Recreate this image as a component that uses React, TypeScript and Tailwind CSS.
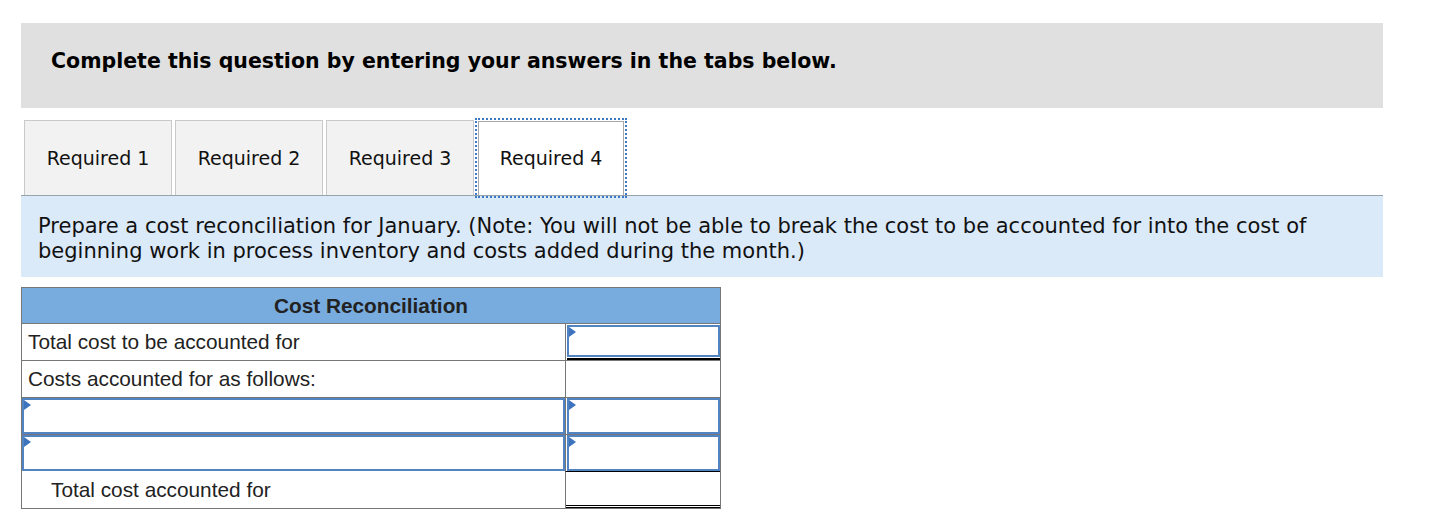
import React from "react";

const verdana = { fontFamily: '"DejaVu Sans", Verdana, sans-serif' };

function Marker() {
  return (
    <span className="absolute left-0 top-0 w-0 h-0 border-y-[5px] border-y-transparent border-l-[7px] border-l-[#3d74bd]" />
  );
}

function InputBox({ className = "" }: { className?: string }) {
  return (
    <div className={`relative border-2 border-[#5284c3] bg-white ${className}`}>
      <Marker />
    </div>
  );
}

function Tab({ label, active }: { label: string; active?: boolean }) {
  if (active) {
    return (
      <div className="ml-[1px] mt-[1px] w-[146px] h-[74px] flex items-center justify-center bg-white border border-[#a8a8a8] border-b-0 outline-2 outline-dotted outline-[#3b78c5] outline-offset-[1px] text-[19px] text-[#111]">
        {label}
      </div>
    );
  }
  return (
    <div className="w-[148px] h-[75px] flex items-center justify-center bg-[#f2f2f2] border border-[#c9c9c9] border-b-0 text-[19px] text-[#111]">
      {label}
    </div>
  );
}

export default function App() {
  return (
    <div className="bg-white min-h-screen pt-[23px] pl-[21px]">
      <div className="w-[1362px]" style={verdana}>
        <div className="h-[85px] bg-[#e0e0e0] flex items-center pl-[30px] pb-[8px]">
          <h2 className="font-bold text-[20.5px] text-black">
            Complete this question by entering your answers in the tabs below.
          </h2>
        </div>

        <div className="flex gap-[3px] pl-[3px] mt-[12px]">
          <Tab label="Required 1" />
          <Tab label="Required 2" />
          <Tab label="Required 3" />
          <Tab label="Required 4" active />
        </div>

        <div className="border-t border-[#9aa3ab] bg-[#dbeaf9] pl-[17px] pt-[18px] pb-[13px] text-[21px] leading-[25px] text-[#111]">
          Prepare a cost reconciliation for January. (Note: You will not be able to break the cost to be accounted for into the cost of
          <br />
          beginning work in process inventory and costs added during the month.)
        </div>
      </div>

      <div
        className="mt-[10px] w-[700px] border border-[#777] text-[20.8px] text-[#222]"
        style={{ fontFamily: '"Liberation Sans", Arial, sans-serif' }}
      >
        <div className="h-[36px] bg-[#78acdf] flex items-center justify-center font-bold border-b border-[#777]">
          Cost Reconciliation
        </div>

        <div className="flex h-[37px] border-b border-[#777]">
          <div className="w-[543px] flex items-center pl-[6px]">Total cost to be accounted for</div>
          <div className="flex-1 border-l border-[#777] pl-[1px] flex flex-col">
            <InputBox className="h-[33px] mt-[1px]" />
            <div className="flex-1 border-y border-black mt-[1px]" />
          </div>
        </div>

        <div className="flex h-[37px] border-b border-[#777]">
          <div className="w-[543px] flex items-center pl-[6px]">Costs accounted for as follows:</div>
          <div className="flex-1 border-l border-[#777]" />
        </div>

        <div className="flex h-[37px] border-b border-[#777]">
          <InputBox className="w-[543px]" />
          <div className="flex-1 border-l border-[#777] pl-[1px]">
            <InputBox className="h-full" />
          </div>
        </div>

        <div className="flex h-[36px]">
          <InputBox className="w-[543px]" />
          <div className="flex-1 border-l border-[#777] pl-[1px]">
            <InputBox className="h-full" />
          </div>
        </div>

        <div className="flex h-[37px]">
          <div className="w-[543px] flex items-center pl-[29px]">Total cost accounted for</div>
          <div className="flex-1 border-l border-[#777] flex flex-col border-t border-t-black">
            <div className="flex-1" />
            <div className="h-[3px] border-y border-black" />
          </div>
        </div>
      </div>
    </div>
  );
}
